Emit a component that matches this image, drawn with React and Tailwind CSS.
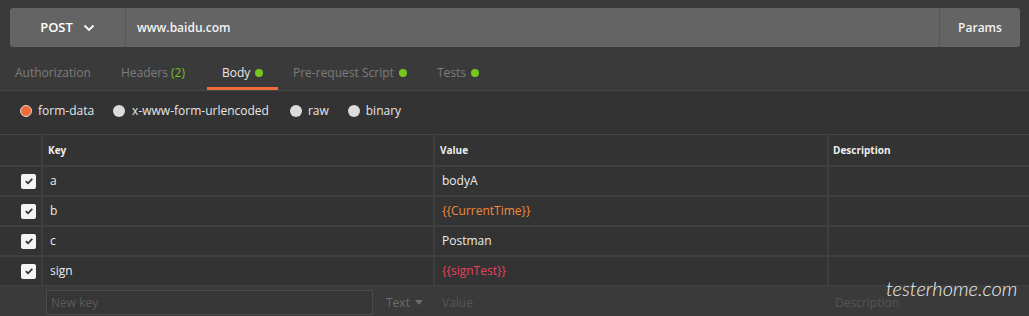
import React from "react";

function Check() {
  return (
    <div className="w-[15px] h-[15px] rounded-[2px] bg-[#f4f4f4] flex items-center justify-center">
      <svg width="10" height="10" viewBox="0 0 10 10">
        <path d="M1.8 5.2 L4 7.3 L8.3 2.8" fill="none" stroke="#333" strokeWidth="1.8" />
      </svg>
    </div>
  );
}

function Dot() {
  return <span className="inline-block w-[8px] h-[8px] rounded-full bg-[#78c51d] ml-[5px]" />;
}

function Radio({ active }) {
  return active ? (
    <span className="w-[12px] h-[12px] rounded-full bg-[#f26b3a] border border-[#e0d6d0] inline-block" />
  ) : (
    <span className="w-[12px] h-[12px] rounded-full bg-[#dcdcdc] inline-block" />
  );
}

const rows = [
  { k: "a", v: "bodyA", c: "text-[#ececec]" },
  { k: "b", v: "{{CurrentTime}}", c: "text-[#ef8a3f]" },
  { k: "c", v: "Postman", c: "text-[#ececec]" },
  { k: "sign", v: "{{signTest}}", c: "text-[#e8415f]" },
];

export default function App() {
  return (
    <div className="w-[1029px] h-[316px] bg-[#333333] font-['Open_Sans',sans-serif] overflow-hidden relative">
      <div className="bg-[#3a3a3a] border-b border-[#474747]">
        <div className="px-[10px] pt-[8px]">
          <div className="flex h-[39px] w-[1010px] rounded-[3px] bg-[#646464]">
            <div className="w-[116px] flex items-center justify-center gap-[10px] border-r border-[#585858] text-white text-[13px] font-semibold pt-[1px]">
              <span>POST</span>
              <svg width="12" height="8" viewBox="0 0 12 8">
                <path d="M1.5 1.5 L6 6 L10.5 1.5" fill="none" stroke="#fff" strokeWidth="1.8" />
              </svg>
            </div>
            <div className="flex-1 flex items-center pl-[11px] text-[12px] text-[#f2f2f2] font-semibold">
              www.baidu.com
            </div>
            <div className="w-[81px] flex items-center justify-center border-l border-[#585858] text-[12px] text-[#f2f2f2] font-semibold">
              Params
            </div>
          </div>
        </div>
        <div className="flex h-[43px] items-end text-[12px] text-[#7d7d7d]">
          <div className="w-[105px] pl-[15px] pb-[6px] border-b-[3px] border-transparent leading-[16px]">Authorization</div>
          <div className="w-[102px] pl-[16px] pb-[6px] border-b-[3px] border-transparent leading-[16px]">
            Headers <span className="text-[#74c21f]">(2)</span>
          </div>
          <div className="w-[71px] pl-[15px] pb-[6px] border-b-[3px] border-[#f26b3a] leading-[16px] text-[#e6e6e6] flex items-center">
            Body<Dot />
          </div>
          <div className="w-[144px] pl-[15px] pb-[6px] border-b-[3px] border-transparent leading-[16px] flex items-center">
            Pre-request Script<Dot />
          </div>
          <div className="pl-[15px] pb-[6px] border-b-[3px] border-transparent leading-[16px] flex items-center">
            Tests<Dot />
          </div>
        </div>
      </div>

      <div className="h-[43px] flex items-center pl-[20px] pb-[4px] text-[12px] text-[#e6e6e6]">
        <Radio active />
        <span className="ml-[6px]">form-data</span>
        <span className="ml-[19px] flex items-center"><Radio /></span>
        <span className="ml-[7px]">x-www-form-urlencoded</span>
        <span className="ml-[21px] flex items-center"><Radio /></span>
        <span className="ml-[6px]">raw</span>
        <span className="ml-[19px] flex items-center"><Radio /></span>
        <span className="ml-[6px]">binary</span>
      </div>

      <div className="border-t border-[#444444]">
        <div className="flex h-[32px] border-b-2 border-[#3f3f3f] text-[10px] font-bold text-[#eeeeee]">
          <div className="w-[43px] border-r-2 border-[#3f3f3f]" />
          <div className="w-[392px] border-r-2 border-[#3f3f3f] pl-[5px] flex items-center">Key</div>
          <div className="w-[394px] border-r-2 border-[#3f3f3f] pl-[5px] flex items-center">Value</div>
          <div className="flex-1 pl-[4px] flex items-center">Description</div>
        </div>
        {rows.map((r) => (
          <div key={r.k} className="flex h-[30px] border-b-2 border-[#3f3f3f] text-[12px]">
            <div className="w-[43px] border-r-2 border-[#3f3f3f] flex items-center pl-[21px]">
              <Check />
            </div>
            <div className="w-[392px] border-r-2 border-[#3f3f3f] pl-[7px] flex items-center text-[#ececec]">{r.k}</div>
            <div className={`w-[394px] border-r-2 border-[#3f3f3f] pl-[7px] flex items-center ${r.c}`}>{r.v}</div>
            <div className="flex-1" />
          </div>
        ))}
        <div className="flex h-[40px] bg-[#3a3a3a] text-[12px] pt-[3px]">
          <div className="w-[46px]" />
          <div className="w-[327px] h-[25px] border border-[#4b4b4b] bg-[#363636] flex items-center pl-[4px] text-[#5a5a5a]">New key</div>
          <div className="w-[62px] pl-[13px] h-[25px] flex items-center text-[#6b6b6b]">
            Text
            <svg width="8" height="5" viewBox="0 0 8 5" className="ml-[5px]">
              <path d="M0 0 L8 0 L4 5 Z" fill="#6b6b6b" />
            </svg>
          </div>
          <div className="w-[394px] pl-[7px] h-[25px] flex items-center text-[#555555]">Value</div>
          <div className="flex-1 pl-[6px] h-[25px] flex items-center text-[#555555]">Description</div>
        </div>
      </div>

      <div className="absolute left-[886px] top-[276px] text-[20px] leading-[24px] font-['Lato',sans-serif] font-light italic text-[#efefef]">
        testerhome.com
      </div>
    </div>
  );
}
